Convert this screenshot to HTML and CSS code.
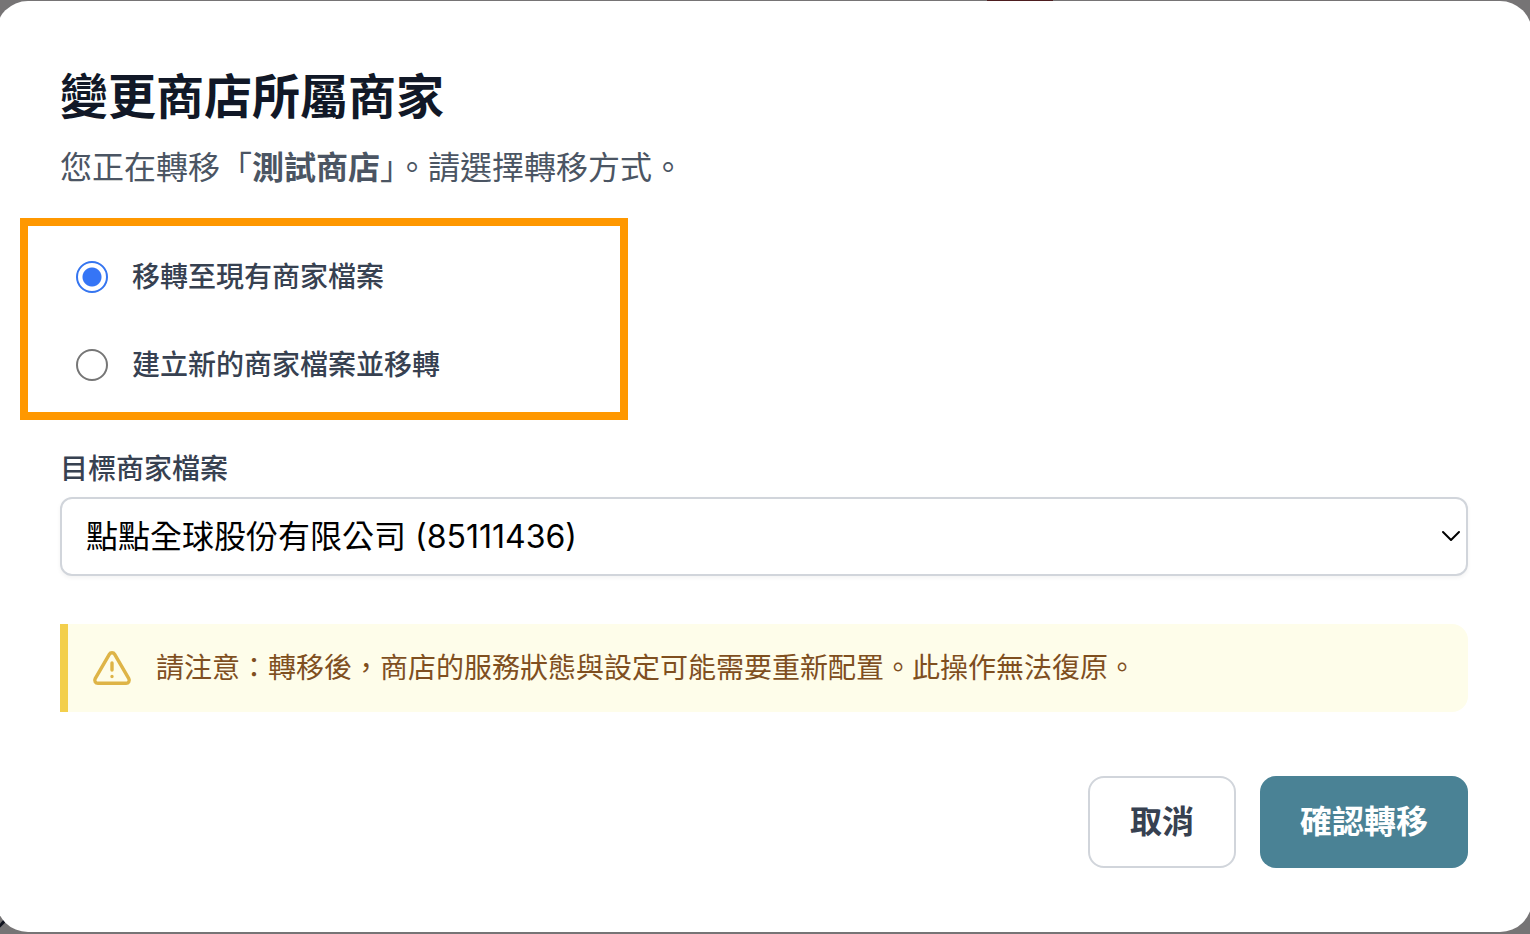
FILE: index.html
```html
<!DOCTYPE html>
<html lang="zh-Hant">
<head>
  <meta charset="UTF-8">
  <meta name="viewport" content="width=device-width, initial-scale=1.0">
  <title>變更商店所屬商家</title>
  <link rel="stylesheet" href="styles.css">
</head>
<body>

  <div class="page-accent"></div>
  <div class="page-mark"></div>

  <form class="modal" role="dialog" aria-labelledby="modalTitle">
    <h1 class="modal-title" id="modalTitle">變更商店所屬商家</h1>
    <p class="modal-subtitle">您正在轉移「<strong>測試商店</strong>」。請選擇轉移方式。</p>

    <!-- Transfer mode -->
    <div class="mode-box" role="radiogroup" aria-labelledby="modalTitle">
      <label class="mode-option">
        <input class="mode-radio" type="radio" name="mode" value="existing" checked>
        <span>移轉至現有商家檔案</span>
      </label>
      <label class="mode-option">
        <input class="mode-radio" type="radio" name="mode" value="new">
        <span>建立新的商家檔案並移轉</span>
      </label>
    </div>

    <!-- Target merchant -->
    <label class="field-label" for="merchant">目標商家檔案</label>
    <div class="select-wrap">
      <select class="select" id="merchant">
        <option>點點全球股份有限公司 (85111436)</option>
      </select>
      <svg class="select-arrow" viewBox="0 0 20 12" fill="none" stroke="#000" stroke-width="2" stroke-linecap="round" stroke-linejoin="round" aria-hidden="true">
        <path d="M2 2l8 8 8-8"/>
      </svg>
    </div>

    <!-- Warning -->
    <div class="notice">
      <svg class="notice-icon" viewBox="0 0 40 40" fill="none" stroke="#deb447" stroke-width="3.4" stroke-linecap="round" stroke-linejoin="round" aria-hidden="true">
        <path d="M17.3 6.3c1.2-2.1 4.2-2.1 5.4 0l14.1 24.4c1.2 2.1-.3 4.6-2.7 4.6H5.900c-2.400 0-3.900-2.500-2.700-4.600z"/>
        <path d="M20 15v7M20 28.400v.1"/>
      </svg>
      <p class="notice-text">請注意：轉移後，商店的服務狀態與設定可能需要重新配置。此操作無法復原。</p>
    </div>

    <div class="actions">
      <button class="btn btn-cancel" type="button">取消</button>
      <button class="btn btn-confirm" type="submit">確認轉移</button>
    </div>
  </form>

</body>
</html>
```
FILE: styles.css
```css
* {
  box-sizing: border-box;
}

body {
  font-family: Inter, 'Noto Sans CJK TC', sans-serif;
  margin: 0;
  background: #767475;
  overflow: hidden;
}

/* Bits of the dimmed page that show around the modal */
.page-accent {
  position: absolute;
  top: 0;
  left: 987px;
  width: 66px;
  height: 2px;
  background: #4d1d1f;
}

.page-mark {
  position: absolute;
  left: -2px;
  top: 922px;
  width: 8px;
  height: 3px;
  background: #10131f;
  transform: rotate(-45deg);
}

.modal {
  position: relative;
  margin: 1px -2px 2px -4px;
  padding: 64px;
  background: #fff;
  border-radius: 32px;
}

.modal-title {
  margin: 0;
  font-size: 48px;
  line-height: 64px;
  font-weight: 700;
  color: #111827;
}

.modal-subtitle {
  margin: 15px 0 26px;
  font-size: 32px;
  line-height: 48px;
  color: #4b5563;
}

.mode-box {
  display: flex;
  flex-direction: column;
  gap: 48px;
  max-width: 608px;
  margin: 0 0 29px -40px;
  padding: 31px 48px 27px;
  border: 8px solid #ff9800;
}

.mode-option {
  display: flex;
  align-items: center;
  gap: 24px;
  font-size: 28px;
  line-height: 40px;
  font-weight: 500;
  color: #374151;
}

.mode-radio {
  appearance: none;
  width: 32px;
  height: 32px;
  margin: 0;
  border: 2px solid #767676;
  border-radius: 50%;
  background: #fff;
}

.mode-radio:checked {
  border-color: #3575f0;
  background: radial-gradient(circle, #3575f6 9px, #fff 10px);
}

.field-label {
  display: block;
  margin-bottom: 8px;
  font-size: 28px;
  line-height: 40px;
  font-weight: 500;
  color: #374151;
}

.select-wrap {
  position: relative;
}

.select {
  appearance: none;
  display: block;
  width: 100%;
  height: 79px;
  padding: 0 24px;
  border: 2px solid #d1d5db;
  border-radius: 12px;
  background: #fff;
  box-shadow: 0 2px 4px rgba(0, 0, 0, 0.05);
  font-family: inherit;
  font-size: 32px;
  color: #000;
}

.select-arrow {
  position: absolute;
  right: 7px;
  top: 33px;
  width: 20px;
  height: 12px;
  pointer-events: none;
}

.notice {
  display: flex;
  align-items: center;
  gap: 24px;
  margin-top: 48px;
  padding: 24px;
  border-left: 8px solid #f3cf4c;
  border-radius: 0 16px 16px 0;
  background: #fefdea;
}

.notice-icon {
  flex: none;
  width: 40px;
  height: 40px;
}

.notice-text {
  margin: 0;
  font-size: 28px;
  line-height: 40px;
  color: #7f4f1f;
}

.actions {
  display: flex;
  justify-content: flex-end;
  gap: 24px;
  margin-top: 64px;
}

.btn {
  height: 92px;
  padding: 0 40px 6px;
  border: 0;
  border-radius: 16px;
  font-family: inherit;
  font-size: 32px;
  font-weight: 700;
  cursor: pointer;
}

.btn-cancel {
  border: 2px solid #d1d5db;
  background: #fff;
  color: #374151;
}

.btn-confirm {
  background: #4a8295;
  color: #fff;
}
```
